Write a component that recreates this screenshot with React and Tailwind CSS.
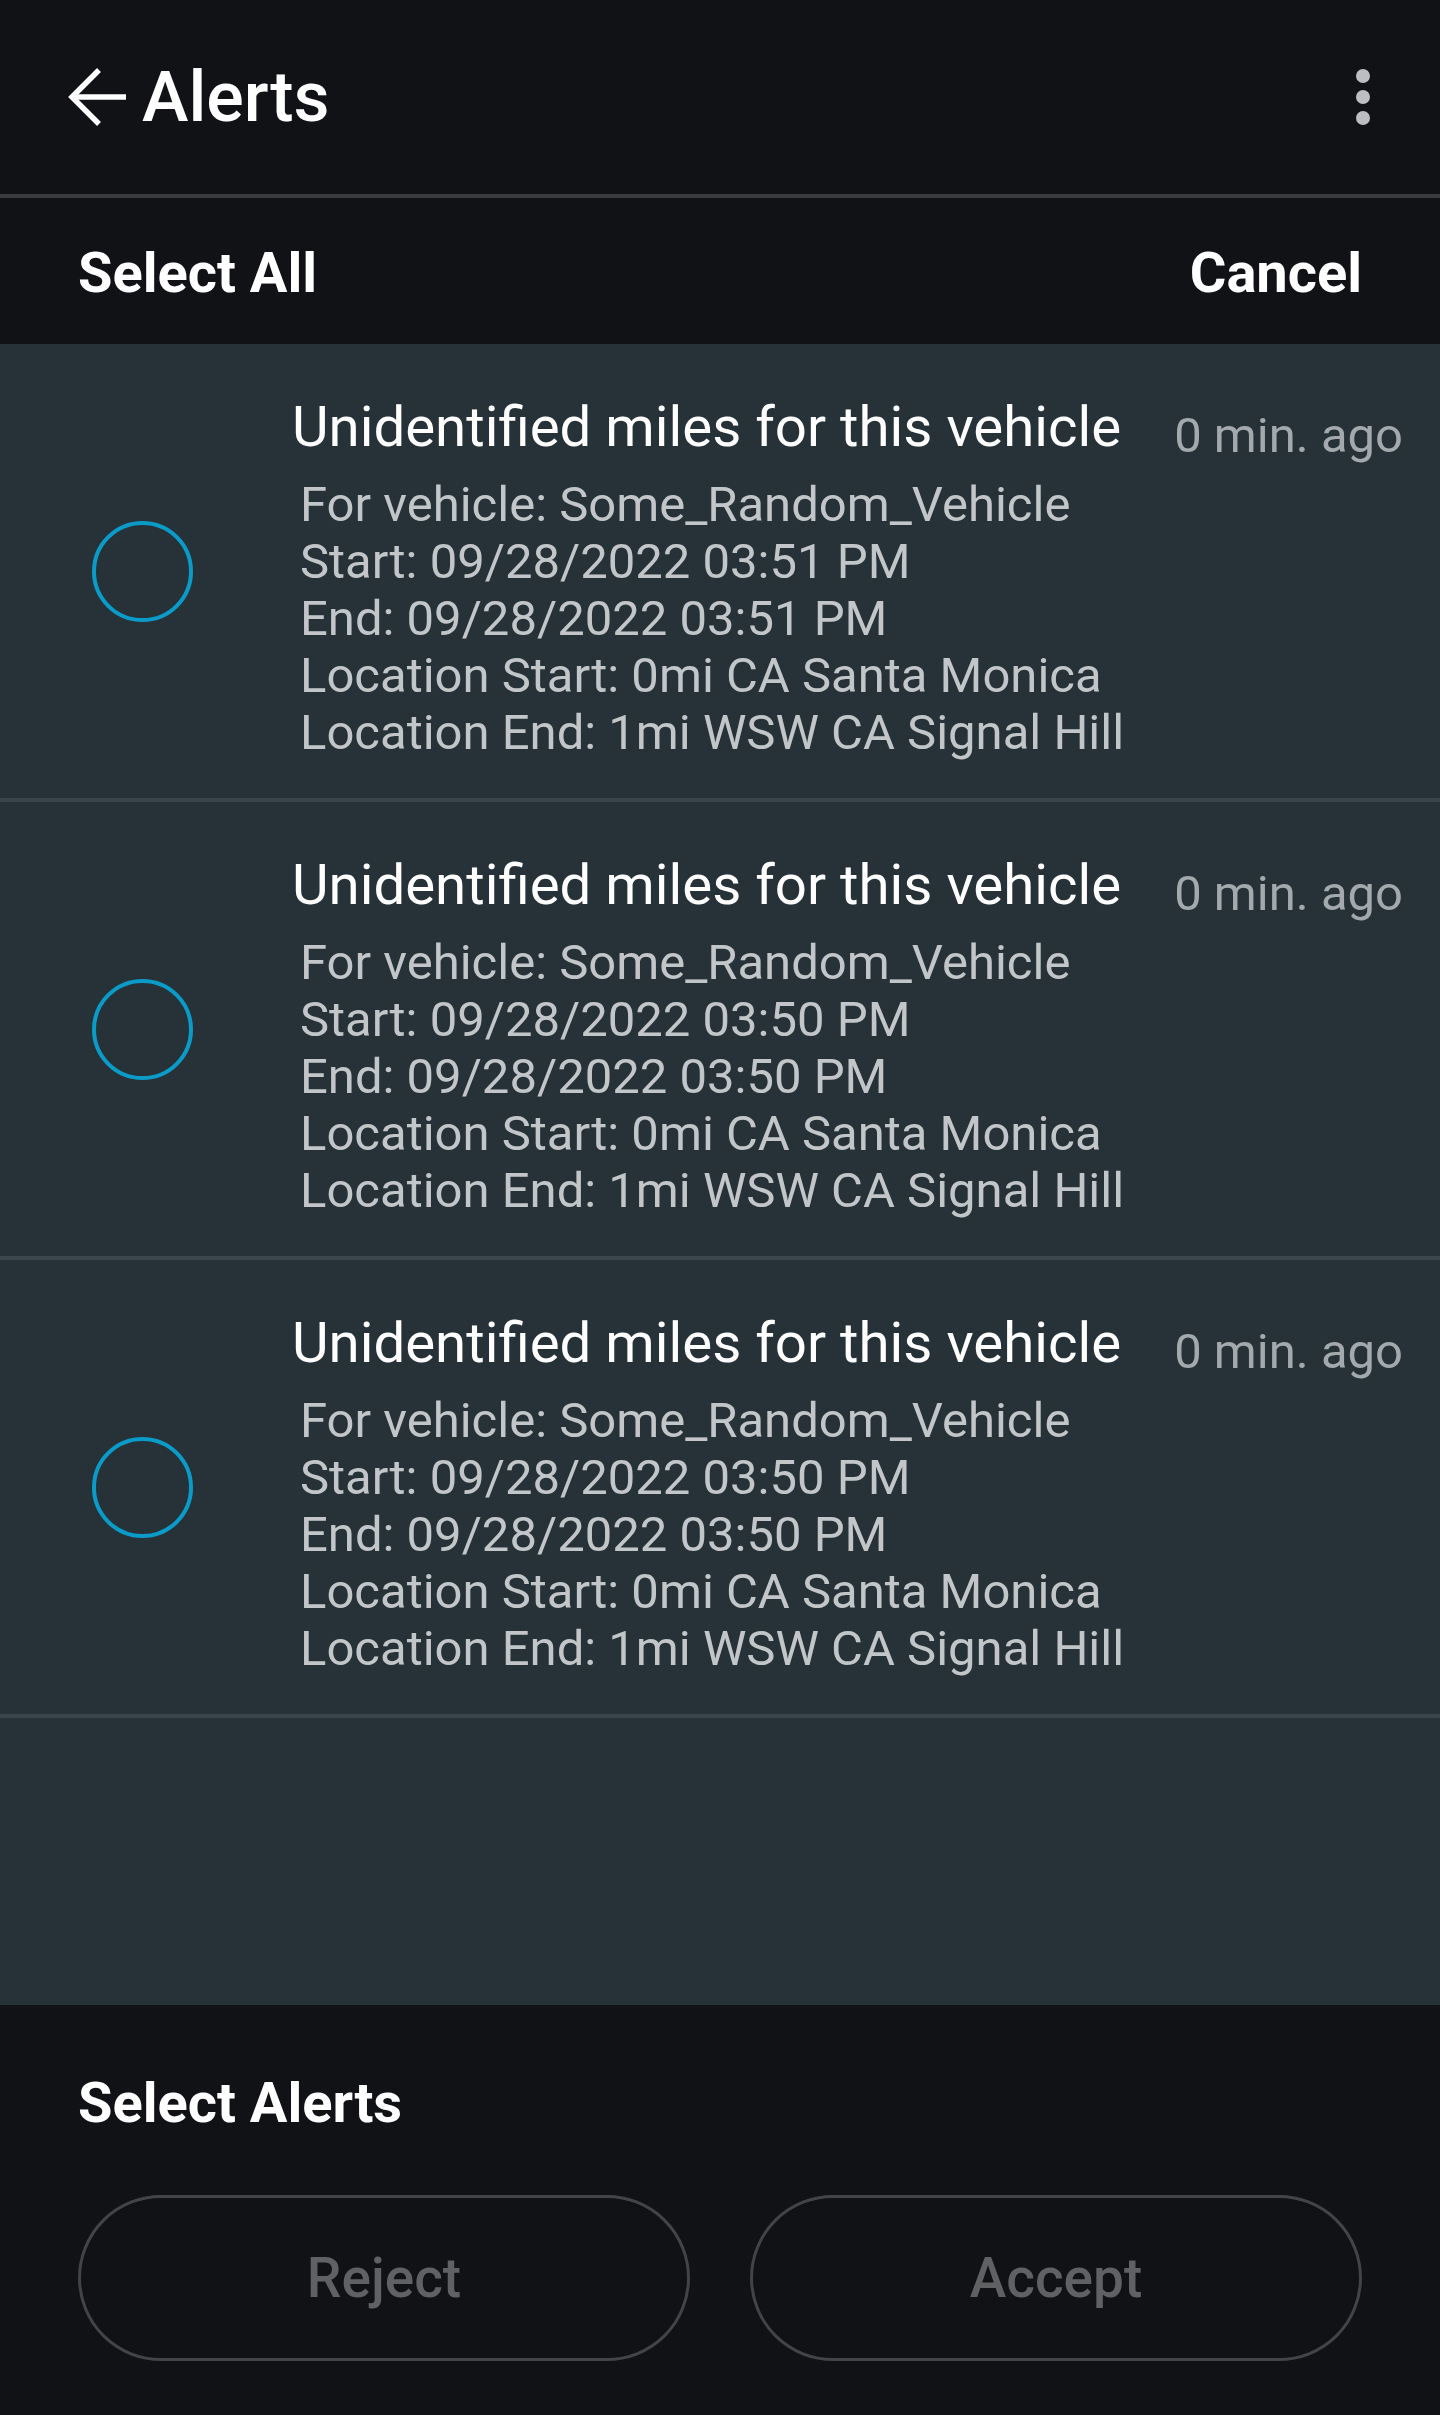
const ALERTS = [
  { start: '09/28/2022 03:51 PM', end: '09/28/2022 03:51 PM' },
  { start: '09/28/2022 03:50 PM', end: '09/28/2022 03:50 PM' },
  { start: '09/28/2022 03:50 PM', end: '09/28/2022 03:50 PM' },
]

function AlertRow({ alert }) {
  return (
    <div className="flex items-center border-b-4 border-[#3a454c]">
      <div className="pl-[92px] pr-[99px] shrink-0">
        <div className="w-[101px] h-[101px] rounded-full border-4 border-[#0a9bc9]" />
      </div>
      <div className="flex-1 min-w-0 pt-[50px] pb-[37px] pr-[37px]">
        <div className="flex items-start justify-between">
          <h3 className="text-[56.4px] leading-[66px] text-white">Unidentified miles for this vehicle</h3>
          <span className="mt-[17px] text-[49px] leading-[49px] text-[#a3a9ac] shrink-0">0 min. ago</span>
        </div>
        <div className="mt-[16px] ml-[8px] text-[49px] leading-[57px] text-[#c3c6c8]">
          <p>For vehicle: Some_Random_Vehicle</p>
          <p>Start: {alert.start}</p>
          <p>End: {alert.end}</p>
          <p>Location Start: 0mi CA Santa Monica</p>
          <p>Location End: 1mi WSW CA Signal Hill</p>
        </div>
      </div>
    </div>
  )
}

export default function App() {
  return (
    <div
      className="w-[1440px] min-h-[2415px] flex flex-col bg-[#111216]"
      style={{ fontFamily: 'Roboto, "Liberation Sans", sans-serif' }}
    >
      <header className="h-[198px] shrink-0 flex items-center justify-between pl-[68px] pr-[70px] border-b-4 border-[#3a3b3d]">
        <div className="flex items-center gap-[14px]">
          <svg width="60" height="60" viewBox="0 0 60 60" fill="none" stroke="white" strokeWidth="5.5">
            <path d="M58 30H5" />
            <path d="M31 3L4 30L31 57" />
          </svg>
          <h1 className="text-[70px] leading-none font-medium text-white">Alerts</h1>
        </div>
        <div className="flex flex-col gap-[7px]">
          <span className="w-[14px] h-[14px] rounded-full bg-[#bdbec0]" />
          <span className="w-[14px] h-[14px] rounded-full bg-[#bdbec0]" />
          <span className="w-[14px] h-[14px] rounded-full bg-[#bdbec0]" />
        </div>
      </header>

      <div className="h-[146px] shrink-0 flex items-center justify-between px-[78px] pt-[4px]">
        <button className="text-[56px] font-bold text-white">Select All</button>
        <button className="text-[56px] font-bold text-white">Cancel</button>
      </div>

      <main className="flex-1 bg-[#263238]">
        {ALERTS.map((a, i) => (
          <AlertRow key={i} alert={a} />
        ))}
      </main>

      <footer className="h-[410px] shrink-0 px-[78px] pt-[65px]">
        <h2 className="text-[56px] leading-[66px] font-bold text-white">Select Alerts</h2>
        <div className="mt-[59px] grid grid-cols-2 gap-[60px]">
          <button className="h-[166px] rounded-full border-[3px] border-[#434446] text-[55px] font-medium text-[#5f6163]">
            Reject
          </button>
          <button className="h-[166px] rounded-full border-[3px] border-[#434446] text-[55px] font-medium text-[#5f6163]">
            Accept
          </button>
        </div>
      </footer>
    </div>
  )
}
